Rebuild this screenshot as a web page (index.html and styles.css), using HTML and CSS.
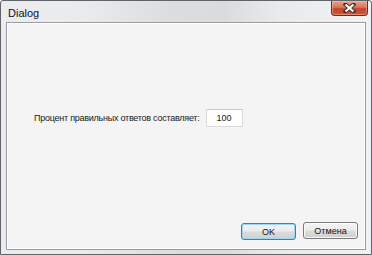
FILE: index.html
```html
<!DOCTYPE html>
<html>
<head>
<meta charset="utf-8">
<link rel="stylesheet" href="styles.css">
</head>
<body>
<div class="window">
  <div class="titlebar">
    <span class="title">Dialog</span>
    <div class="close">
      <svg width="13" height="10" viewBox="0 0 13 10"><path d="M2.5 1.5 L10.5 8.5 M10.5 1.5 L2.5 8.5" stroke="#4a2a26" stroke-width="4" stroke-linecap="square"/><path d="M2.5 1.5 L10.5 8.5 M10.5 1.5 L2.5 8.5" stroke="#ffffff" stroke-width="2.2"/></svg>
    </div>
  </div>
  <div class="client">
    <div class="row">
      <span class="label">Процент правильных ответов составляет:</span>
      <div class="field">100</div>
    </div>
    <div class="spacer"></div>
    <div class="buttons">
      <button class="btn default">OK</button>
      <button class="btn">Отмена</button>
    </div>
  </div>
</div>
</body>
</html>
```
FILE: styles.css
```css
html, body {
  margin: 0;
  padding: 0;
  background: #ffffff;
}
.window {
  width: 372px;
  height: 255px;
  box-sizing: border-box;
  border: 1px solid #5f6468;
  border-radius: 3px 3px 0 0;
  background: linear-gradient(90deg, #ececee 0%, #eaebed 22%, #dcdddf 45%, #dadbdd 60%, #e9eaec 75%, #f0f1f3 100%);
  display: flex;
  flex-direction: column;
  padding: 0 5px 4px 5px;
}
.titlebar {
  height: 21px;
  display: flex;
  align-items: flex-start;
  justify-content: space-between;
}
.title {
  font-family: "Liberation Sans", Arial, sans-serif;
  font-size: 11px;
  color: #111;
  margin: 5px 0 0 2px;
  line-height: 14px;
}
.close {
  width: 37px;
  height: 15px;
  margin-right: -2px;
  box-sizing: border-box;
  border: 1px solid #6b2b22;
  border-top: none;
  border-radius: 0 0 4px 4px;
  background: linear-gradient(180deg, #e8a593 0%, #d9735c 45%, #c4452b 55%, #d0553a 100%);
  box-shadow: inset 0 0 0 1px rgba(255, 200, 180, 0.45);
  display: flex;
  align-items: center;
  justify-content: center;
}
.client {
  flex: 1;
  border: 1px solid #9a9c9f;
  box-shadow: inset 0 0 0 1px #ffffff;
  background: #f4f4f4;
  display: flex;
  flex-direction: column;
  padding: 86px 7px 9px 27px;
}
.row {
  display: flex;
  align-items: center;
  gap: 6px;
}
.label {
  font-family: "Liberation Sans", Arial, sans-serif;
  font-size: 9px;
  letter-spacing: -0.25px;
  color: #1a1a1a;
}
.field {
  width: 37px;
  height: 18px;
  box-sizing: border-box;
  border: 1px solid #dadada;
  border-top-color: #c9c9c9;
  background: #ffffff;
  font-family: "Liberation Sans", Arial, sans-serif;
  font-size: 9px;
  color: #1a1a1a;
  display: flex;
  align-items: center;
  justify-content: center;
}
.spacer {
  flex: 1;
}
.buttons {
  display: flex;
  justify-content: flex-end;
  gap: 7px;
}
.btn {
  width: 55px;
  height: 17px;
  box-sizing: border-box;
  margin: 0;
  padding: 0;
  border: 1px solid #7a7a7a;
  border-radius: 3px;
  background: linear-gradient(180deg, #f4f4f4 0%, #ebebeb 48%, #dddddd 52%, #cfcfcf 100%);
  box-shadow: inset 0 0 0 1px rgba(255, 255, 255, 0.8);
  font-family: "Liberation Sans", Arial, sans-serif;
  font-size: 9px;
  color: #111;
  line-height: 14px;
}
.btn.default {
  border-color: #3c7fb1;
  box-shadow: inset 0 0 0 1px #9fd8f4;
  margin-top: 1px;
}
```
